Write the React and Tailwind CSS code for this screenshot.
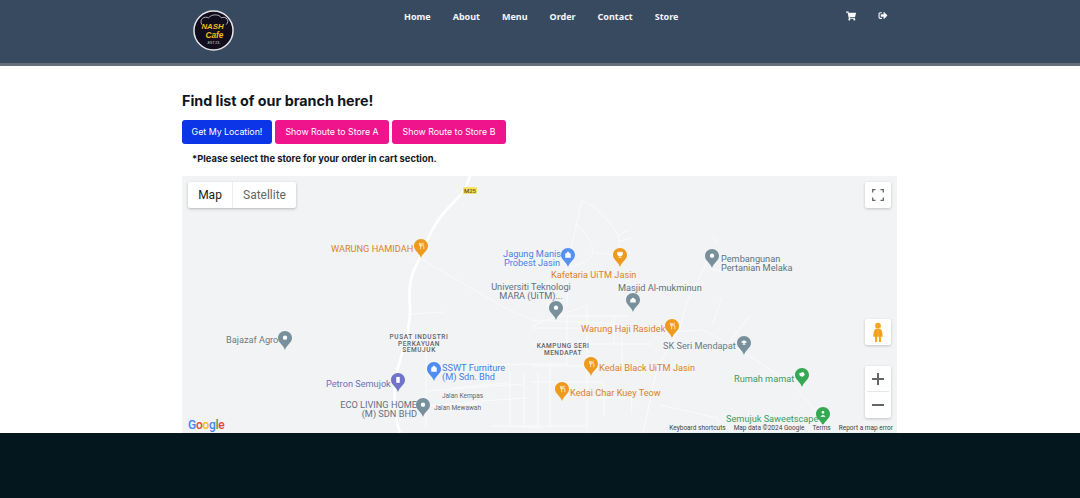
import React from "react";
import { FaShoppingCart, FaSignOutAlt } from "react-icons/fa";

const roadsMain = [
  "M288 0 C284 14 278 20 268 30 C252 46 246 62 238 82 C230 96 226 106 228 130 C229 150 222 170 215 195 C211 215 212 240 218 257",
];
const roads = [
  "M241 84 L318 129 C330 136 345 142 360 147",
  "M400 24 L390 69 L383 99 M400 24 C412 30 425 40 436 59 L438 72 M393 49 C405 56 410 66 411 76 C409 84 400 88 388 91 M411 76 L432 79",
  "M436 59 L447 54 M438 65 L450 62",
  "M531 59 L535 69 M525 86 L505 126 L498 152 L475 192 L461 257",
  "M528 92 L541 96 M540 122 L530 149 M568 139 L548 166",
  "M350 144 L421 147 L485 156 L521 154 L561 176 L611 209 L635 236 L641 257",
  "M478 229 L535 242 L540 257 M405 129 L405 257 M372 140 L446 140 M350 152 L422 152 M350 168 L470 168 M350 190 L470 190 M350 206 L420 206 M385 140 L385 190 M432 140 L432 170",
  "M440 150 L440 190 M422 206 L422 240 M400 222 L450 222 L449 238",
  "M262 136 L229 138 M244 155 L244 252 M244 190 L270 194 L300 189 L345 188 L385 188 M244 215 L342 208 M244 230 L300 225 L345 222",
  "M268 212 L326 207 M262 228 L300 228",
  "M328 196 L328 250 L360 252 M342 196 L342 250 M356 196 L356 250 M368 186 L368 250 L405 250",
  "M310 250 L370 250 M385 100 L385 130 M405 129 L350 150 M366 105 L366 131",
];

function Pin({ c, cls, kind }) {
  const glyph = {
    food: <path d="M9.500 5.500v4.400M7.800 5.500v3c0 1 .7 1.500 1.700 1.500s1.700-.5 1.700-1.500v-3M9.500 10v4.500M14 5.300c-1.200.4-1.500 2-1.500 4.200h1.500v5" fill="none" stroke="#fff" strokeWidth="1" />,
    dot: <circle cx="10" cy="9.500" r="3.100" fill="#fff" />,
    cup: <path d="M6.500 6h7v2.500c0 2-1.500 3-3.500 3s-3.500-1-3.500-3zM8 13.500h4" fill="#fff" stroke="#fff" />,
    bag: <path d="M6.500 8h7v5.500h-7zM8 8c0-3 4-3 4 0" fill="#fff" stroke="#fff" strokeWidth=".8" />,
    pump: <path d="M7.500 5.500h5v8.500h-5z" fill="#fff" />,
    mosque: <path d="M6 13.500V9.500l4-3 4 3v4z" fill="#fff" />,
    school: <path d="M5.500 8.500L10 6l4.500 2.500L10 11zM8 11h4v1.500H8z" fill="#fff" />,
    green: <path d="M6 7.500l6-2 2 4-3 3-4-1z" fill="#fff" />,
    person: <path d="M10 5.500a2 2 0 110 4 2 2 0 010-4zM6.500 14c0-3 7-3 7 0z" fill="#fff" />,
  }[kind];
  return (
    <svg viewBox="0 0 20 27" className={`absolute h-[19px] w-[14px] ${cls}`}>
      <path d="M10 0C4.500 0 0 4.300 0 9.800c0 6.800 7.700 9.700 10 17.200 2.300-7.500 10-10.400 10-17.200C20 4.300 15.500 0 10 0z" fill={c} />
      {glyph}
    </svg>
  );
}

function Label({ cls, children }) {
  return (
    <div className={`absolute whitespace-nowrap font-['Roboto',sans-serif] text-[9.200px] leading-[9px] [text-shadow:0_0_2px_#f4f5f6,0_0_2px_#f4f5f6] ${cls}`}>
      {children}
    </div>
  );
}

function Pegman() {
  return (
    <svg viewBox="0 0 14 24" className="h-[21px] w-[12px]">
      <circle cx="7" cy="4" r="3.400" fill="#f5a623" />
      <path d="M3.500 8.500C4.500 7.500 9.500 7.500 10.500 8.500C12 9.500 12.500 15 12.500 17H10.500V23H8V17H6V23H3.500V17H1.500C1.500 15 2 9.500 3.500 8.500Z" fill="#f5a623" />
      <path d="M4.500 10v6M9.500 10v6" stroke="#d98c12" strokeWidth=".6" />
    </svg>
  );
}

function Logo() {
  return (
    <svg viewBox="0 0 42 42" className="h-[41px] w-[41px]">
      <circle cx="21" cy="21" r="20" fill="#120d1c" stroke="#e8e6ea" strokeWidth="1.500" />
      <path d="M9 15C6 9 12 6 16 8C19 4 27 4 29 8C34 6 38 11 34 15" fill="none" stroke="#d9d6dc" strokeWidth=".8" />
      <text x="20" y="19.500" textAnchor="middle" fontFamily="'Liberation Sans',sans-serif" fontWeight="700" fontStyle="italic" fontSize="8" fill="#f2bd1d">NASH</text>
      <text x="22" y="28.500" textAnchor="middle" fontFamily="'Liberation Sans',sans-serif" fontWeight="700" fontStyle="italic" fontSize="8.500" fill="#f2bd1d">Cafe</text>
      <text x="21" y="34.500" textAnchor="middle" fontFamily="'Liberation Sans',sans-serif" fontSize="3.500" fill="#ddd">-EST 23-</text>
    </svg>
  );
}

const navItems = ["Home", "About", "Menu", "Order", "Contact", "Store"];

export default function App() {
  return (
    <div className="flex h-[498px] w-[1080px] flex-col overflow-hidden bg-white">
      <header className="h-[66px] shrink-0 border-b-[3px] border-[#646f7b] bg-[#374a5f] pl-[193px]">
        <div className="flex items-start">
          <div className="mt-[10px] w-[211px] shrink-0">
            <Logo />
          </div>
          <nav className="mt-[10px] flex w-[442px] gap-[22px] font-['Noto_Sans',sans-serif] text-[9px] font-bold leading-[13px] text-[#f4f6f8]">
            {navItems.map((n) => (
              <span key={n}>{n}</span>
            ))}
          </nav>
          <div className="mt-[11px] flex gap-[22px] text-[#f8f9fa]">
            <FaShoppingCart className="h-[10px] w-[10px]" />
            <FaSignOutAlt className="h-[9px] w-[10px]" />
          </div>
        </div>
      </header>

      <main className="h-[367px] shrink-0 pl-[182px]">
        <h1 className="mt-[26px] font-['Inter',sans-serif] text-[14.300px] font-bold leading-[18px] text-[#0d1620]">
          Find list of our branch here!
        </h1>
        <div className="mt-[10px] flex gap-[3px] font-['Inter',sans-serif] text-[8.800px] leading-[24px] text-[#fff]">
          <button className="h-[24px] w-[90px] rounded-[3px] bg-[#0b35e6]">Get My Location!</button>
          <button className="h-[24px] w-[114px] rounded-[3px] bg-[#f0148c]">Show Route to Store A</button>
          <button className="h-[24px] w-[114px] rounded-[3px] bg-[#f0148c]">Show Route to Store B</button>
        </div>
        <p className="mt-[9px] pl-[10px] font-['Inter',sans-serif] text-[9.400px] font-bold leading-[12px] text-[#10181f]">
          *Please select the store for your order in cart section.
        </p>

        <div className="relative mt-[11px] h-[257px] w-[715px] overflow-hidden bg-[#f1f3f4]">
          <svg viewBox="0 0 715 257" className="absolute left-0 top-0 h-full w-full" fill="none">
            {roads.map((d, i) => (
              <path key={i} d={d} stroke="#fbfbfc" strokeWidth="1" />
            ))}
            {roadsMain.map((d, i) => (
              <path key={i} d={d} stroke="#ffffff" strokeWidth="2.600" />
            ))}
          </svg>

          <div className="absolute left-[281px] top-[11px] h-[7px] w-[14px] rounded-[1px] bg-[#f7e26b] text-center font-['Roboto',sans-serif] text-[6px] font-medium leading-[7px] text-[#5c5320]">M25</div>

          <Label cls="left-[149px] top-[68px] text-[#d9822b]">WARUNG HAMIDAH</Label>
          <Pin c="#ee9a1c" kind="food" cls="left-[232px] top-[63px]" />
          <Label cls="left-[321px] top-[73px] w-[58px] text-center text-[#4a80e8]">Jagung Manis<br />Probest Jasin</Label>
          <Pin c="#5491f5" kind="bag" cls="left-[379px] top-[72px]" />
          <Pin c="#ee9a1c" kind="cup" cls="left-[431px] top-[72px]" />
          <Label cls="left-[369px] top-[94px] text-[#d9822b]">Kafetaria UiTM Jasin</Label>
          <Pin c="#78909c" kind="dot" cls="left-[523px] top-[73px]" />
          <Label cls="left-[539px] top-[78px] text-[#5f7280]">Pembangunan<br />Pertanian Melaka</Label>
          <Label cls="left-[309px] top-[106px] w-[80px] text-center text-[#5f7280]">Universiti Teknologi<br />MARA (UiTM)...</Label>
          <Pin c="#78909c" kind="dot" cls="left-[367px] top-[125px]" />
          <Label cls="left-[436px] top-[107px] text-[#5f7280]">Masjid Al-mukminun</Label>
          <Pin c="#78909c" kind="mosque" cls="left-[444px] top-[117px]" />
          <Label cls="left-[399px] top-[148px] text-[#d9822b]">Warung Haji Rasidek</Label>
          <Pin c="#ee9a1c" kind="food" cls="left-[483px] top-[143px]" />
          <Label cls="left-[44px] top-[159px] text-[#6a7a86]">Bajazaf Agro</Label>
          <Pin c="#78909c" kind="dot" cls="left-[96px] top-[155px]" />
          <div className="absolute left-[195px] top-[158px] w-[84px] text-center font-['Roboto',sans-serif] text-[6.500px] font-medium leading-[6.500px] tracking-[0.6px] text-[#5f6368]">PUSAT INDUSTRI<br />PERKAYUAN<br />SEMUJUK</div>
          <div className="absolute left-[350px] top-[167px] w-[62px] text-center font-['Roboto',sans-serif] text-[6.500px] font-medium leading-[7px] tracking-[0.5px] text-[#5f6368]">KAMPUNG SERI<br />MENDAPAT</div>
          <Label cls="left-[481px] top-[165px] text-[#6a7a86]">SK Seri Mendapat</Label>
          <Pin c="#78909c" kind="school" cls="left-[555px] top-[160px]" />
          <Pin c="#ee9a1c" kind="food" cls="left-[402px] top-[181px]" />
          <Label cls="left-[417px] top-[187px] text-[#d9822b]">Kedai Black UiTM Jasin</Label>
          <Label cls="left-[388px] top-[212px] text-[#d9822b]">Kedai Char Kuey Teow</Label>
          <Pin c="#ee9a1c" kind="food" cls="left-[373px] top-[206px]" />
          <Pin c="#4d8df5" kind="bag" cls="left-[245px] top-[186px]" />
          <Label cls="left-[260px] top-[187px] text-[#3f80e5]">SSWT Furniture<br />(M) Sdn. Bhd</Label>
          <Label cls="left-[144px] top-[203px] text-[#6d6fc0]">Petron Semujok</Label>
          <Pin c="#6f74c8" kind="pump" cls="left-[209px] top-[197px]" />
          <Label cls="left-[157px] top-[224px] w-[78px] text-right text-[#5f7280]">ECO LIVING HOME<br />(M) SDN BHD</Label>
          <Pin c="#78909c" kind="dot" cls="left-[234px] top-[222px]" />
          <div className="absolute left-[260px] top-[217px] font-['Roboto',sans-serif] text-[6.500px] leading-[7px] text-[#5f6368] [text-shadow:0_0_2px_#fff]">Jalan Kempas</div>
          <div className="absolute left-[252px] top-[229px] font-['Roboto',sans-serif] text-[6.500px] leading-[7px] text-[#5f6368] [text-shadow:0_0_2px_#fff]">Jalan Mewawah</div>
          <Label cls="left-[552px] top-[198px] text-[#3f9a62]">Rumah mamat</Label>
          <Pin c="#34a853" kind="green" cls="left-[613px] top-[192px]" />
          <Label cls="left-[544px] top-[238px] text-[#3f9a62]">Semujuk Saweetscape</Label>
          <Pin c="#34a853" kind="person" cls="left-[634px] top-[231px]" />

          <div className="absolute left-[6px] top-[6px] flex h-[26px] w-[108px] rounded-[2px] bg-white font-['Roboto',sans-serif] text-[12px] leading-[26px] shadow-[0_1px_3px_rgba(0,0,0,0.25)]">
            <div className="w-[45px] border-r border-[#eee] text-center text-[#1a1a1a]">Map</div>
            <div className="flex-1 text-center text-[#666]">Satellite</div>
          </div>

          <div className="absolute right-[6px] top-[6px] flex h-[26px] w-[26px] items-center justify-center rounded-[2px] bg-white shadow-[0_1px_3px_rgba(0,0,0,0.2)]">
            <svg viewBox="0 0 12 12" className="h-[12px] w-[12px]" fill="none" stroke="#666" strokeWidth="1.300">
              <path d="M.7 3.500V.7h2.800M8.500.7h2.800v2.800M11.300 8.500v2.800H8.500M3.500 11.300H.7V8.500" />
            </svg>
          </div>

          <div className="absolute right-[6px] top-[143px] flex h-[26px] w-[26px] items-center justify-center rounded-[2px] bg-white shadow-[0_1px_3px_rgba(0,0,0,0.2)]">
            <Pegman />
          </div>

          <div className="absolute right-[6px] top-[190px] flex h-[52px] w-[26px] flex-col items-center rounded-[2px] bg-white shadow-[0_1px_3px_rgba(0,0,0,0.2)]">
            <div className="relative h-[26px] w-[22px] border-b border-[#e6e6e6]">
              <span className="absolute left-[5px] top-[11.500px] h-[2.500px] w-[12px] bg-[#666]" />
              <span className="absolute left-[9.750px] top-[6.750px] h-[12px] w-[2.500px] bg-[#666]" />
            </div>
            <div className="relative h-[26px] w-[22px]">
              <span className="absolute left-[5px] top-[11.500px] h-[2.500px] w-[12px] bg-[#666]" />
            </div>
          </div>

          <div className="absolute bottom-[1px] left-[6px] font-['Roboto',sans-serif] text-[12px] font-medium leading-[14px] tracking-[-0.3px]">
            <span className="text-[#4285f4]">G</span><span className="text-[#ea4335]">o</span><span className="text-[#fbbc05]">o</span><span className="text-[#4285f4]">g</span><span className="text-[#34a853]">l</span><span className="text-[#ea4335]">e</span>
          </div>

          <div className="absolute bottom-0 right-[4px] flex gap-[8px] whitespace-nowrap bg-[#f1f3f4]/70 font-['Roboto',sans-serif] text-[6.500px] leading-[9px] text-[#444]">
            <span>Keyboard shortcuts</span>
            <span>Map data ©2024 Google</span>
            <span>Terms</span>
            <span>Report a map error</span>
          </div>
        </div>
      </main>

      <footer className="flex-1 bg-[#04161e]" />
    </div>
  );
}
